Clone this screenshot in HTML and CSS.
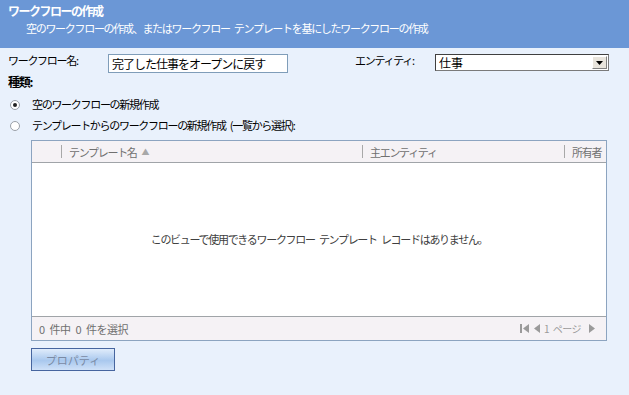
FILE: index.html
```html
<!DOCTYPE html>
<html lang="ja">
<head>
    <meta charset="UTF-8">
    <title>ワークフローの作成</title>
    <link rel="stylesheet" href="styles.css">
</head>
<body>
    <div class="header">
        <div class="title">ワークフローの作成</div>
        <div class="subtitle">空のワークフローの作成、またはワークフロー テンプレートを基にしたワークフローの作成</div>
    </div>

    <div class="form">
        <div class="row">
            <label class="name-label">ワークフロー名:</label>
            <input class="name-input" type="text" value="完了した仕事をオープンに戻す">
            <label class="entity-label">エンティティ:</label>
            <div class="select">
                <span>仕事</span>
                <span class="select-btn">
                    <svg width="7" height="4" viewBox="0 0 7 4"><path d="M0 0h7L3.5 4z" fill="#000"/></svg>
                </span>
            </div>
        </div>

        <div class="kind">種類:</div>
        <div class="radio-row first"><span class="radio checked"></span>空のワークフローの新規作成</div>
        <div class="radio-row"><span class="radio"></span>テンプレートからのワークフローの新規作成 (一覧から選択):</div>

        <div class="grid">
            <div class="grid-head">
                <div class="col col-check"></div>
                <div class="col col-name">テンプレート名<span class="sort">▲</span></div>
                <div class="col col-entity">主エンティティ</div>
                <div class="col col-owner">所有者</div>
            </div>
            <div class="grid-body">このビューで使用できるワークフロー テンプレート レコードはありません。</div>
            <div class="grid-foot">
                <span>0 件中 0 件を選択</span>
                <span class="pager">
                    <svg width="9" height="9" viewBox="0 0 9 9"><rect x="0" y="0" width="2" height="9" fill="#9a9a9a"/><path d="M9 0v9L3 4.5z" fill="#9a9a9a"/></svg>
                    <svg width="7" height="9" viewBox="0 0 7 9"><path d="M7 0v9L1 4.5z" fill="#9a9a9a"/></svg>
                    <span>1 ページ</span>
                    <svg width="7" height="9" viewBox="0 0 7 9"><path d="M0 0v9l6-4.5z" fill="#9a9a9a"/></svg>
                </span>
            </div>
        </div>

        <button class="prop-btn" disabled>プロパティ</button>
    </div>
</body>
</html>
```

FILE: styles.css
```css
body {
    margin: 0;
    background-color: #e9f1fc;
    font-family: "Noto Sans CJK JP", "DejaVu Sans", sans-serif;
    font-size: 11px;
    letter-spacing: -1.3px;
    word-spacing: 3px;
    color: #000;
    width: 629px;
    height: 395px;
    overflow: hidden;
}
.header {
    background-color: #6b97d6;
    color: #fff;
    height: 48px;
    box-sizing: border-box;
    padding: 2px 8px 0;
}
.title {
    font-weight: bold;
    font-size: 12px;
    letter-spacing: -1.5px;
    line-height: 18px;
}
.subtitle {
    padding-left: 18px;
    line-height: 16px;
}
.form {
    padding: 0 0 0 8px;
}
.row {
    display: flex;
    align-items: center;
    height: 26px;
    margin-top: 2px;
}
.name-label {
    width: 100px;
    margin-top: -6px;
}
.name-input {
    width: 180px;
    height: 19px;
    box-sizing: border-box;
    border: 1px solid #7f9db9;
    padding: 0 3px;
    font: inherit;
    font-size: 12px;
    letter-spacing: -1px;
    margin: 0;
}
.entity-label {
    margin-left: 67px;
    width: 80px;
    margin-top: -6px;
}
.select {
    width: 174px;
    height: 17px;
    box-sizing: border-box;
    border: 1px solid #7a7a7a;
    border-top-color: #404040;
    border-left-color: #404040;
    background: #fff;
    display: flex;
    align-items: center;
    justify-content: space-between;
    font-size: 12px;
    letter-spacing: 0;
    padding-left: 3px;
    margin-top: -1px;
}
.select-btn {
    width: 15px;
    height: 13px;
    margin-right: 1px;
    background: #e8e4dc;
    border: 1px solid #fff;
    border-right-color: #808080;
    border-bottom-color: #808080;
    box-sizing: border-box;
    display: flex;
    align-items: center;
    justify-content: center;
}
.kind {
    font-weight: bold;
    font-size: 12px;
    line-height: 16px;
    margin-top: -2px;
}
.radio-row {
    display: flex;
    align-items: center;
    height: 21px;
}
.radio-row.first {
    margin-top: 3px;
}
.radio {
    width: 10px;
    height: 10px;
    border-radius: 50%;
    border: 1px solid #9aa0a8;
    background: #fff;
    margin: 3px 12px 0 2px;
    box-sizing: border-box;
    position: relative;
}
.radio.checked::after {
    content: "";
    position: absolute;
    left: 2px;
    top: 2px;
    width: 4px;
    height: 4px;
    border-radius: 50%;
    background: #222;
}
.grid {
    margin: 5px 0 0 23px;
    width: 576px;
    height: 201px;
    box-sizing: border-box;
    border: 1px solid #8ca4c0;
    background: #fff;
    display: flex;
    flex-direction: column;
}
.grid-head {
    display: flex;
    height: 21px;
    flex-shrink: 0;
    background: #f5f2f5;
    border-bottom: 1px solid #a0a4a8;
    color: #707070;
    overflow: hidden;
    white-space: nowrap;
}
.col {
    display: flex;
    align-items: center;
    flex-shrink: 0;
    padding-left: 7px;
    border-left: 1px solid #a8a8a8;
    margin: 4px 0;
}
.col-check {
    width: 29px;
    padding: 0;
    border: none;
}
.col-name {
    width: 293px;
}
.col-entity {
    width: 194px;
}
.col-owner {
    width: 40px;
}
.sort {
    font-size: 8px;
    color: #a8a8a8;
    margin-left: 5px;
}
.grid-body {
    flex: 1;
    display: flex;
    align-items: center;
    justify-content: center;
    color: #404040;
    padding-bottom: 1px;
}
.grid-foot {
    height: 23px;
    flex-shrink: 0;
    background: #f5f2f5;
    border-top: 1px solid #a0a4a8;
    display: flex;
    align-items: center;
    justify-content: space-between;
    padding: 0 10px 0 7px;
    color: #707070;
    letter-spacing: -0.5px;
}
.pager {
    display: flex;
    align-items: center;
    gap: 4px;
    color: #9a9a9a;
    font-size: 10px;
    word-spacing: 2px;
}
.pager span {
    margin-right: 4px;
}
.prop-btn {
    margin: 7px 0 0 23px;
    width: 84px;
    height: 23px;
    border: 1px solid #46659f;
    background: linear-gradient(#e0ecfb, #a9c8ee 55%, #cfe1f8);
    color: #7a8aa4;
    font: inherit;
    padding: 0;
}
```
